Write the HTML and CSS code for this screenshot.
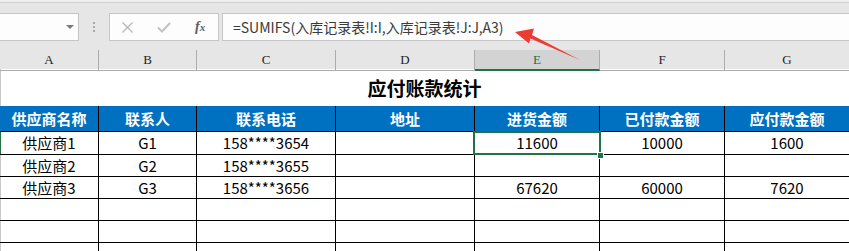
FILE: index.html
```html
<!DOCTYPE html>
<html lang="zh-CN">
<head>
<meta charset="utf-8">
<title>应付账款统计</title>
<link rel="stylesheet" href="styles.css">
</head>
<body>
<div class="app">
  <div class="toolbar">
    <div class="namebox"><span class="caret"></span></div>
    <div class="grip"><i></i><i></i><i></i></div>
    <div class="fbtns">
      <svg class="ic-x" width="11" height="11" viewBox="0 0 11 11"><path d="M0.5 0.5 L10.5 10.5 M10.5 0.5 L0.5 10.5" stroke="#b8b8b8" stroke-width="1.3" fill="none"/></svg>
      <svg class="ic-ok" width="14" height="11" viewBox="0 0 14 11"><path d="M1 5.5 L5 9.5 L13 1" stroke="#c2c2c2" stroke-width="2" fill="none"/></svg>
      <span class="fx">f<small>x</small></span>
    </div>
    <div class="formula">=SUMIFS(入库记录表!I:I,入库记录表!J:J,A3)</div>
  </div>

  <div class="colheads">
    <div>A</div><div>B</div><div>C</div><div>D</div><div class="sel">E</div><div>F</div><div>G</div>
  </div>

  <div class="title">应付账款统计</div>

  <div class="grid">
    <div class="h first">供应商名称</div><div class="h">联系人</div><div class="h">联系电话</div><div class="h">地址</div><div class="h">进货金额</div><div class="h">已付款金额</div><div class="h">应付款金额</div>

    <div class="c first act r1">供应商1</div><div class="c r1">G1</div><div class="c r1">158****3654</div><div class="c r1"></div><div class="c r1 cur">11600</div><div class="c r1">10000</div><div class="c r1">1600</div>

    <div class="c first">供应商2</div><div class="c">G2</div><div class="c">158****3655</div><div class="c"></div><div class="c"></div><div class="c"></div><div class="c"></div>

    <div class="c first">供应商3</div><div class="c">G3</div><div class="c">158****3656</div><div class="c"></div><div class="c">67620</div><div class="c">60000</div><div class="c">7620</div>

    <div class="c first"></div><div class="c"></div><div class="c"></div><div class="c"></div><div class="c"></div><div class="c"></div><div class="c"></div>
    <div class="c first"></div><div class="c"></div><div class="c"></div><div class="c"></div><div class="c"></div><div class="c"></div><div class="c"></div>
    <div class="c first"></div><div class="c"></div><div class="c"></div><div class="c"></div><div class="c"></div><div class="c"></div><div class="c"></div>
  </div>

  <svg class="arrow" width="849" height="251" viewBox="0 0 849 251">
    <polygon points="515,32 534,28.5 532,35 580,60 530.5,38.5 529,43.5" fill="#ee3a33"/>
  </svg>
</div>
</body>
</html>
```

FILE: styles.css
```css
html, body {
  margin: 0;
  padding: 0;
  background: #ffffff;
}

.app {
  position: relative;
  width: 849px;
  height: 251px;
  overflow: hidden;
  font-family: "Noto Sans CJK SC", "Noto Sans", sans-serif;
  color: #000;
}

/* ---------- formula toolbar ---------- */
.toolbar {
  height: 50px;
  box-sizing: border-box;
  padding-top: 13px;
  display: flex;
  align-items: flex-start;
  background: linear-gradient(#eeeeee 0 2px, #cfcfcf 2px 3px, #e6e6e6 3px);
}

.namebox {
  width: 80px;
  height: 28px;
  margin-left: -1px;
  box-sizing: border-box;
  border: 1px solid #c6c6c6;
  background: #fdfdfd;
  display: flex;
  align-items: center;
  justify-content: flex-end;
  padding-right: 4px;
}

.caret {
  width: 0;
  height: 0;
  border-left: 4px solid transparent;
  border-right: 4px solid transparent;
  border-top: 4px solid #7a7a7a;
}

.grip {
  margin-left: 14px;
  margin-top: 9px;
  display: flex;
  flex-direction: column;
  gap: 2px;
}

.grip i {
  display: block;
  width: 2px;
  height: 2px;
  background: #a8a8a8;
}

.fbtns {
  margin-left: 14px;
  width: 110px;
  height: 28px;
  box-sizing: border-box;
  border: 1px solid #c6c6c6;
  background: #fdfdfd;
  display: flex;
  align-items: center;
}

.ic-x {
  margin-left: 12px;
}

.ic-ok {
  margin-left: 24px;
}

.fx {
  margin-left: 24px;
  font-family: "Liberation Serif", "DejaVu Serif", serif;
  font-style: italic;
  font-weight: bold;
  font-size: 14px;
  color: #5c5c5c;
  line-height: 1;
}

.fx small {
  font-size: 11px;
}

.formula {
  flex: 1;
  margin-left: 3px;
  margin-right: -1px;
  height: 28px;
  box-sizing: border-box;
  border: 1px solid #c6c6c6;
  background: #fdfdfd;
  padding-left: 10px;
  font-size: 14px;
  line-height: 26px;
  color: #3a3a3a;
  white-space: nowrap;
}

/* ---------- column headers ---------- */
.colheads {
  display: grid;
  grid-template-columns: 99px 98px 139px 139px 125px 125px 125px;
  height: 19px;
  background: #e6e6e6;
}

.colheads div {
  box-sizing: border-box;
  border-right: 1px solid #acacac;
  border-bottom: 1px solid #acacac;
  text-align: center;
  font-family: "Liberation Serif", "DejaVu Serif", serif;
  font-size: 13px;
  line-height: 19px;
  color: #1e1e1e;
}

.colheads div.sel {
  background: #d3d3d3;
  color: #217346;
  border-bottom: 2px solid #217346;
}

/* ---------- sheet body ---------- */
.title {
  height: 37px;
  line-height: 37px;
  text-align: center;
  font-size: 19px;
  font-weight: bold;
  box-shadow: inset 1px 0 #c8c8c8;
}

.grid {
  display: grid;
  grid-template-columns: 99px 98px 139px 139px 125px 125px 125px;
  grid-auto-rows: 22px;
  grid-template-rows: 26px 23px;
}

.grid > div {
  box-sizing: border-box;
  border-right: 1px solid #000;
  border-bottom: 1px solid #000;
  text-align: center;
  white-space: nowrap;
  overflow: visible;
}

.h {
  background: #0070c0;
  color: #fff;
  font-weight: bold;
  font-size: 15px;
  line-height: 25px;
}

.c {
  font-size: 15px;
  line-height: 21px;
}

.c.r1 {
  line-height: 22px;
}

.c.first {
  box-shadow: inset 1px 0 #c8c8c8;
}

.c.first.act {
  box-shadow: inset 1px 0 #217346;
}

.cur {
  position: relative;
}

.cur::after {
  content: "";
  position: absolute;
  left: -2px;
  right: -2px;
  top: -1px;
  bottom: -1px;
  border: 2px solid #217346;
  z-index: 2;
}

.cur::before {
  content: "";
  position: absolute;
  right: -4px;
  bottom: -4px;
  width: 5px;
  height: 5px;
  background: #217346;
  outline: 1px solid #fff;
  z-index: 3;
}

.arrow {
  position: absolute;
  left: 0;
  top: 0;
  pointer-events: none;
}
```
